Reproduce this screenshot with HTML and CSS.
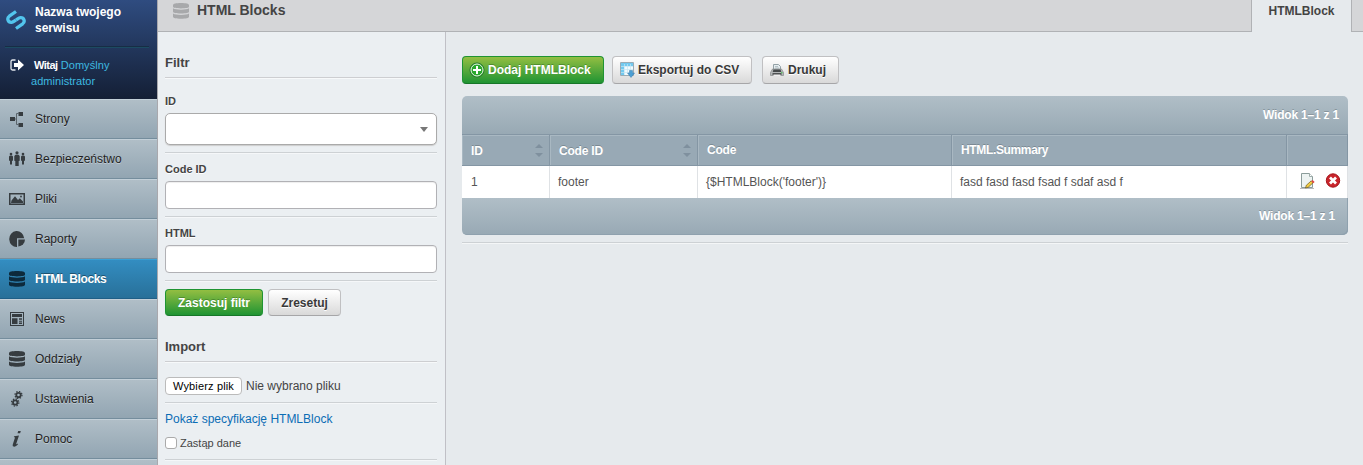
FILE: index.html
```html
<!DOCTYPE html>
<html lang="pl">
<head>
<meta charset="utf-8">
<title>HTML Blocks</title>
<link rel="stylesheet" href="styles.css">
</head>
<body>
<svg width="0" height="0" class="defs">
  <symbol id="db" viewBox="0 0 16 16"><path d="M0 2.2C0 .9 3 .1 8 .1s8 .8 8 2.1v1.6c0 .9-3 1.6-8 1.6S0 4.700 0 3.800zM0 5.300c1.500 1 4.500 1.400 8 1.400s6.500-.4 8-1.400v3.500c0 1-3 1.700-8 1.700S0 9.800 0 8.800zM0 10.500c1.500 1 4.500 1.400 8 1.400s6.500-.4 8-1.400v3.300c0 1.200-3 2-8 2s-8-.8-8-2z"/></symbol>
</svg>
<div class="app">
  <nav class="sidebar">
    <div class="brand">
      <div class="site">
        <svg class="logo" width="20" height="20" viewBox="0 0 20 20"><path d="M10 1.500 3.300 6.200C.5 8.300 2 12.500 5.500 12.300c1.700-.1 2.800-1.300 4.500-2.300"/><path d="M10 18.500l6.700-4.700C19.500 11.700 18 7.500 14.500 7.700c-1.700.1-2.800 1.300-4.500 2.300"/></svg>
        <span>Nazwa twojego<br>serwisu</span>
      </div>
      <div class="welcome">
        <svg class="exit" width="15" height="13" viewBox="0 0 15 13"><path d="M5.500 1H2.500A1.500 1.500 0 0 0 1 2.500v7A1.500 1.500 0 0 0 2.500 11h3" fill="none" stroke="#e4e8ee" stroke-width="1.300"/><path d="M4 4h4V.5L14 6l-6 5.500V8H4z" fill="#fff"/></svg>
        <span><b>Witaj</b> <a>Domyślny</a><br><a class="second">administrator</a></span>
      </div>
    </div>
    <ul class="menu">
      <li><svg viewBox="0 0 16 16"><path d="M1 6h5v4H1zM9.500 1h4.500v4H9.500zM9.500 12h4.500v4H9.500z"/><path d="M6 8h2M10 2.500H7.500v11H10" fill="none" stroke="#5b656c"/></svg><span>Strony</span></li>
      <li><svg viewBox="0 0 16 16"><circle cx="2" cy="3" r="1.300"/><circle cx="8" cy="1.800" r="1.600"/><circle cx="14" cy="3" r="1.300"/><path d="M1 4.500h2L4 5.500v4l-1 .5v3.500H1V10L0 9.500v-4zM6.500 3.700h3l1.200 1.200v4.800l-1 .4V15H6.300v-4.900l-1-.4V4.900zM13 4.500h2l1 1v4l-1 .5v3.500h-2V10l-1-.5v-4z"/></svg><span>Bezpieczeństwo</span></li>
      <li><svg viewBox="0 0 16 16"><path fill-rule="evenodd" d="M0 2h16v12H0zM1.500 3.500v9h13v-9z"/><path d="M2 12 2.500 9.500 6 5.300l3 3.600 1.800-1.700L14 10.500V12z"/><circle cx="12" cy="5.500" r=".9"/></svg><span>Pliki</span></li>
      <li><svg viewBox="0 0 16 16"><path d="M8 8V16A7.500 8 0 1 1 15.200 7.300H8z"/><path d="M9.300 8.500H16a7 7 0 0 1-6.700 7z"/></svg><span>Raporty</span></li>
      <li class="active"><svg><use href="#db"/></svg><span>HTML Blocks</span></li>
      <li><svg viewBox="0 0 16 16"><path fill-rule="evenodd" d="M1 1h14v14H1zM2 2v12h12V2z"/><path d="M3 3h10v3H3zM3 7.200h5.500V13H3zM10 7.200h3v1.500h-3zM10 9.700h3v1h-3zM10 11.500h3V13h-3z"/></svg><span>News</span></li>
      <li><svg><use href="#db"/></svg><span>Oddziały</span></li>
      <li><svg viewBox="0 0 16 16"><g fill="none" stroke="#363c40"><circle cx="9.500" cy="4" r="2.200" stroke-width="1.800"/><circle cx="9.500" cy="4" r="3.500" stroke-width="1.200" stroke-dasharray="1.400 1.350"/><circle cx="6.200" cy="11.500" r="2.200" stroke-width="1.800"/><circle cx="6.200" cy="11.500" r="3.600" stroke-width="1.300" stroke-dasharray="1.400 1.430"/></g></svg><span>Ustawienia</span></li>
      <li><svg viewBox="0 0 16 16"><path d="M9.200 0h2.600l-.7 2.300H8.500zM5.200 5.200l4.800-.8-2.700 8c-.3 1 .3 1 1.500.2l.2.6C7.500 15.300 5.500 16 4.500 15.500c-1-.4-1-1.500-.5-2.800l2-6.200-1.200-.4z"/></svg><span>Pomoc</span></li>
      <li></li>
    </ul>
  </nav>
  <main class="main">
    <header class="top">
      <h1><svg width="16" height="16"><use href="#db"/></svg>HTML Blocks</h1>
      <div class="tab">HTMLBlock</div>
    </header>
    <div class="body">
      <form class="filter">
        <h3>Filtr</h3>
        <div class="field id"><label>ID</label><div class="select"></div></div>
        <div class="field"><label>Code ID</label><input type="text"></div>
        <div class="field"><label>HTML</label><input type="text"></div>
        <div class="actions"><button type="button" class="btn green apply">Zastosuj filtr</button><button type="button" class="btn reset">Zresetuj</button></div>
        <h3 class="import">Import</h3>
        <div class="file"><span class="choose">Wybierz plik</span><span class="none">Nie wybrano pliku</span></div>
        <div class="spec"><a>Pokaż specyfikację HTMLBlock</a><label class="check"><i></i><span>Zastąp dane</span></label></div>
      </form>
      <section class="content">
        <div class="toolbar">
          <button type="button" class="btn green add"><svg width="16" height="16" viewBox="0 0 16 16"><circle cx="8" cy="8" r="7" fill="#29a82c" stroke="#24702b"/><circle cx="8" cy="8" r="6" fill="none" stroke="#eaf7e6"/><path d="M8 4v8M4 8h8" stroke="#fff" stroke-width="2"/></svg><span>Dodaj HTMLBlock</span></button>
          <button type="button" class="btn export"><svg width="16" height="16" viewBox="0 0 16 16"><path d="M1.500.5h13v13h-13z" fill="#f2fafd" stroke="#9aabb4"/><path d="M2 1h12v3H2zM2 1h3v12H2z" fill="#72c9ef"/><path d="M5.500 2v11M8.500 2v8M11.500 2v8M2 4.500h12M2 7.500h12M2 10.500h8" stroke="#c5e5f2" stroke-width=".7"/><path d="M10.500 8.500h3V11h2L12 15.500 8.500 11h2z" fill="#4b9fd4" stroke="#3a7ba9" stroke-width=".5"/></svg><span>Eksportuj do CSV</span></button>
          <button type="button" class="btn print"><svg width="16" height="16" viewBox="0 0 16 16"><path d="M4.500 8V2.500h5l2 2V8" fill="#e6edf0" stroke="#93a1a6"/><path d="M6 4.500h3M6 6h4" stroke="#a9b7bc" stroke-width=".8"/><path d="m3.500 7-2 3.500V13.500h13v-3L12.500 7z" fill="#b4b7b8" stroke="#85898b" stroke-width=".7"/><path d="M4.500 7.500h7l.8 2.500H3.700z" fill="#45494a"/><path d="M3.500 11h9v2h-9z" fill="#505354"/><path d="M4.500 12.500h7V14h-7z" fill="#eee"/><path d="M12 10.300h1.500v1H12z" fill="#3fc54a"/></svg><span>Drukuj</span></button>
        </div>
        <div class="grid">
          <div class="band head"><span>Widok 1–1 z 1</span></div>
          <div class="row titles">
            <div class="sort"><span>ID</span><i></i></div><div class="sort"><span>Code ID</span><i></i></div><div><span>Code</span></div><div><span class="summary">HTML.Summary</span></div><div></div>
          </div>
          <div class="row data">
            <div><span>1</span></div><div><span>footer</span></div><div><span>{$HTMLBlock('footer')}</span></div><div><span>fasd fasd fasd fsad f sdaf asd f</span></div>
            <div class="tools">
              <svg width="16" height="16" viewBox="0 0 16 16"><path d="M2.500.5h8l3 3v11h-11z" fill="#edf3f2" stroke="#8b9c9a"/><path d="M10.500.5v3h3" fill="#fff" stroke="#9eacaa"/><path d="M1 15.500h14" stroke="#aaa" stroke-width=".8"/><path d="m6.500 15 .8-2.700 5-4.500 1.800 1.900-4.800 4.500z" fill="#f3ce42" stroke="#6b5520" stroke-width=".7"/><path d="m12.300 8.300 1.300-1.200 2 1.800-1.400 1.300z" fill="#df4543"/></svg>
              <svg width="16" height="16" viewBox="0 0 16 16"><circle cx="8" cy="7.500" r="6.700" fill="#c9252b" stroke="#a5161d"/><path d="m5 4.500 6 6m0-6-6 6" stroke="#fff" stroke-width="2.700"/></svg>
            </div>
          </div>
          <div class="band foot"><span>Widok 1–1 z 1</span></div>
        </div>
      </section>
    </div>
  </main>
</div>
</body>
</html>
```
FILE: styles.css
```css
* { box-sizing: border-box; }
body { margin: 0; width: 1363px; height: 465px; overflow: hidden; font: 12px/16px "Liberation Sans", Arial, sans-serif; color: #444; background: #e6eaed; }
.defs { display: block; height: 0; }
.app { display: flex; height: 465px; overflow: hidden; }
.sidebar { width: 157px; flex: none; background: #9fb0bb; }
.brand { height: 99px; padding: 4px 8px 0 5px; background: linear-gradient(#2f4c80, #141f35); }
.site { display: flex; height: 43px; color: #fff; font-weight: bold; border-bottom: 1px solid #172d45; box-shadow: 0 1px #1c4b62; }
.site span { letter-spacing: 0; }
.logo { margin: 6px 9px 0 1px; flex: none; fill: none; stroke: #52c5ed; stroke-width: 3.300; }
.welcome { display: flex; padding-top: 10px; color: #fff; font-size: 11px; }
.welcome b { letter-spacing: -.5px; margin-left: 3px; }
.welcome a { color: #3ebae0; letter-spacing: .05px; }
.exit { margin: 2px 6px 0 5px; flex: none; }
.menu { margin: 0; padding: 0; list-style: none; }
.menu li { display: flex; align-items: center; height: 40px; padding: 0 9px; gap: 10px; color: #1f1f1f; background: linear-gradient(#b0bec7, #92a5b2); border-top: 1px solid #c2cfd8; border-bottom: 1px solid #748d9d; text-shadow: 0 1px rgba(255,255,255,.35); }
.menu svg { width: 16px; height: 16px; fill: #363c40; }
.menu .active { color: #fff; font-weight: bold; background: linear-gradient(#338dc1, #287099); border-top-color: #3aa0d5; border-bottom-color: #1f5f87; text-shadow: 0 -1px rgba(0,0,0,.4); }
.menu .active span { letter-spacing: -.42px; }
.menu .active svg { fill: #0d2a3c; }
.main { display: flex; flex-direction: column; flex: 1; border-left: 1px solid #a8a8ad; }
.top { display: flex; height: 32px; background: #d5d6d8; box-shadow: inset 0 -1px #b0b2b5; }
.top h1 { display: flex; flex: 1; gap: 8px; margin: 0; padding: 2px 0 0 15px; font-size: 14px; line-height: 17px; color: #444; }
.top h1 svg { margin-top: 1px; fill: #a8a9ab; }
.tab { width: 101px; margin-right: 11px; padding-top: 3px; text-align: center; font-weight: bold; background: #e6eaed; border: solid #b0b2b5; border-width: 0 1px; }
.body { display: flex; flex: 1; }
.filter { width: 288px; flex: none; padding: 21px 8px 0 7px; background: #ebeff2; border-right: 1px solid #c0c0c6; }
.filter h3 { height: 25px; margin: 0; font-size: 13px; line-height: 20px; border-bottom: 1px solid #cdced1; box-shadow: 0 1px #f7f9fa; }
.field { height: 64px; padding-top: 8px; border-bottom: 1px solid #cdd1d4; box-shadow: 0 1px #f5f7f9; }
.field.id { height: 75px; padding-top: 15px; }
.field label { display: block; height: 20px; font-size: 11px; font-weight: bold; text-shadow: 0 1px #fff; }
.field input { display: block; width: 272px; height: 28px; border: 1px solid #b1b1b5; border-radius: 4px; background: #fff; box-shadow: inset 0 1px 1px #eee; }
.select { display: flex; align-items: center; justify-content: flex-end; height: 32px; padding-right: 8px; border: 1px solid #aaa; border-radius: 5px; background: #fff; box-shadow: 0 1px 1px #ccc; }
.select::after { content: ""; border: 4px solid transparent; border-top: 5px solid #777; border-bottom: 0; }
.btn { display: flex; align-items: center; justify-content: center; height: 28px; padding: 0; color: #393939; font: bold 12px "Liberation Sans", Arial, sans-serif; border: 1px solid #c0c0c2; border-bottom-color: #a6a6a8; border-radius: 4px; background: linear-gradient(#fff, #d9d9d9); text-shadow: 0 1px #fff; }
.green { color: #fff; border-color: #1f9433; border-bottom-color: #167628; background: linear-gradient(#93be42, #1f9433); text-shadow: 0 -1px rgba(30,80,20,.4); }
.actions { display: flex; gap: 5px; padding-top: 8px; }
.actions .btn { height: 27px; }
.apply { width: 98px; }
.reset { width: 73px; }
.filter .import { height: 25px; margin-top: 21px; }
.file { display: flex; height: 41px; padding-top: 15px; align-items: flex-start; gap: 4px; border-bottom: 1px solid #cdd1d4; box-shadow: 0 1px #f5f7f9; }
.choose { width: 77px; height: 18px; text-align: center; font-size: 11px; letter-spacing: .15px; line-height: 17px; color: #000; border: 1px solid #bbb; border-radius: 4px; background: #fff; }
.none { line-height: 18px; }
.spec { height: 57px; padding-top: 8px; border-bottom: 1px solid #cdd1d4; box-shadow: 0 1px #f5f7f9; }
.spec a { display: block; color: #0b6db5; }
.check { display: flex; align-items: center; gap: 3px; margin-top: 8px; font-size: 11px; }
.check i { width: 12px; height: 12px; border: 1px solid #aaa; border-radius: 3px; background: #fff; }
.content { flex: 1; padding: 24px 15px 0 16px; }
.toolbar { display: flex; height: 40px; }
.toolbar .btn { justify-content: flex-start; gap: 3px; padding-left: 6px; }
.add { width: 142px; margin-right: 8px; }
.export { width: 140px; margin-right: 10px; }
.print { width: 77px; }
.grid { padding-bottom: 7px; border-bottom: 1px solid #cdd1d4; box-shadow: 0 1px #f4f6f7; }
.band { display: flex; align-items: center; justify-content: flex-end; background: linear-gradient(#b0bec7, #98a9b4); color: #fff; font-weight: bold; text-shadow: 0 -1px rgba(0,0,0,.2); }
.band span { letter-spacing: -.2px; }
.head { height: 38px; padding-right: 9px; border-radius: 5px 5px 0 0; }
.foot { height: 37px; padding: 0 13px 2px 0; border-radius: 0 0 5px 5px; box-shadow: inset -1px -1px #8fa1ae; }
.row { display: grid; grid-template-columns: 88px 148px 254px 335px 61px; }
.titles { height: 32px; color: #fff; font-weight: bold; background: #98a9b5; border-top: 1px solid #8496a4; border-bottom: 1px solid #8496a4; box-shadow: inset 0 1px #a9b8c2; text-shadow: 0 -1px rgba(0,0,0,.2); }
.titles span { letter-spacing: -.2px; }
.titles .summary { letter-spacing: -.35px; }
.titles div { padding: 7px 8px 0 9px; border-right: 1px solid #8496a4; box-shadow: inset 1px 0 #a9b8c2; }
.titles .sort { display: flex; justify-content: space-between; padding: 8px 6px 0 9px; }
.sort i { display: flex; flex-direction: column; gap: 5px; padding-top: 1px; }
.sort i::before, .sort i::after { content: ""; border: 4px solid transparent; border-top-width: 0; border-bottom: 4px solid #7f909e; }
.sort i::after { border-bottom-width: 0; border-top: 4px solid #7f909e; }
.data { height: 32px; color: #555; background: #fff; }
.data div { padding: 8px 8px 0; border-right: 1px solid #dfe2e5; }
.data div:first-child { padding-left: 9px; }
.data .tools { display: flex; gap: 10px; padding: 7px 0 0 12px; }
```
